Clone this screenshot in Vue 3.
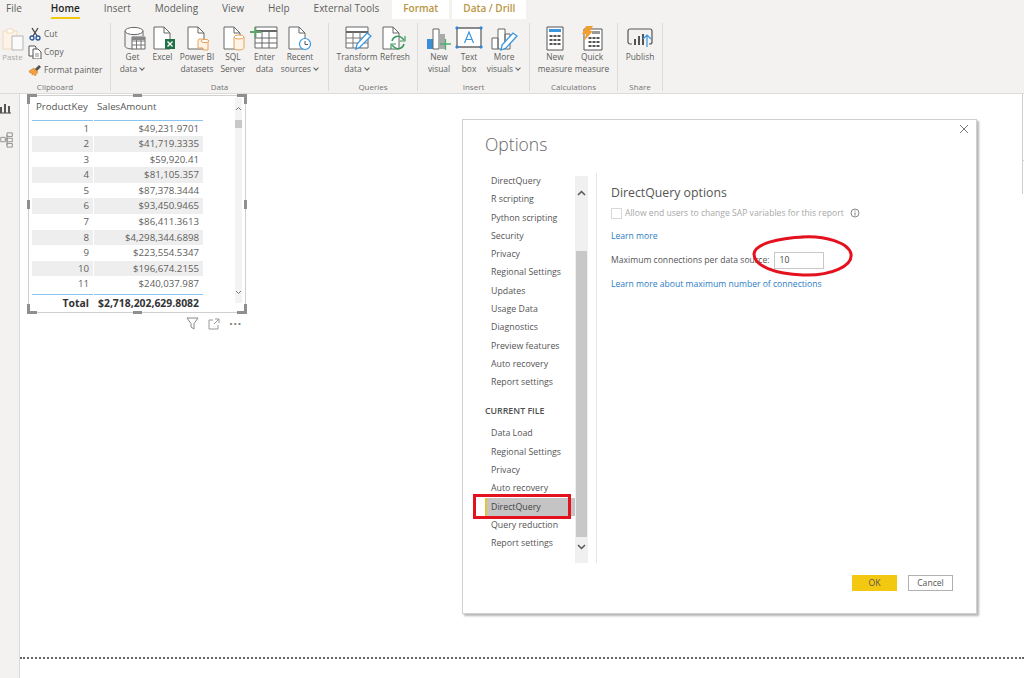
<template>
  <div class="app">
    <nav class="tabs">
      <span v-for="t in tabs" :key="t" class="tab" :class="{ first: t === 'File', active: t === 'Home' }">{{ t }}</span>
      <span class="tab ctx">Format</span>
      <span class="tab ctx second">Data / Drill</span>
    </nav>

    <div class="ribbon">
      <section class="group clipboard">
        <div class="items">
          <div class="btn paste">
            <svg width="24" height="26" viewBox="0 0 24 26"><path d="M2 5h14v18H2z" fill="#fdf3e6" stroke="#f3d9b8"/><path d="M6 3h6v4H6z" fill="#fff" stroke="#f3d9b8"/><path d="M11 10h11v14H11z" fill="#fafafa" stroke="#b5b5b5"/></svg>
            <span>Paste</span>
          </div>
          <div class="small">
            <div class="row">
              <svg width="14" height="14" viewBox="0 0 14 14"><path d="M4 1l5 8M10 1L5 9" stroke="#444" stroke-width="1.3" fill="none"/><circle cx="4" cy="11" r="2" fill="none" stroke="#2b579a" stroke-width="1.3"/><circle cx="10" cy="11" r="2" fill="none" stroke="#2b579a" stroke-width="1.3"/></svg>
              <span>Cut</span>
            </div>
            <div class="row">
              <svg width="14" height="14" viewBox="0 0 14 14"><path d="M1 1h6l1 1v9H1z" fill="#fff" stroke="#555"/><path d="M5 4h5l3 3v7H5z" fill="#fff" stroke="#555"/><path d="M7 9h4M7 11h4" stroke="#888"/></svg>
              <span>Copy</span>
            </div>
            <div class="row">
              <svg width="14" height="14" viewBox="0 0 14 14"><path d="M1 8l5-3 4 4-3 4-1-2-2 1 0-2-2 0z" fill="#f0a040" stroke="#d9822b" stroke-width=".6"/><path d="M7 6l4-4 2 2-4 4z" fill="#555"/></svg>
              <span>Format painter</span>
            </div>
          </div>
        </div>
        <div class="glabel">Clipboard</div>
      </section>

      <section class="group data">
        <div class="items">
          <div class="btn w29">
            <svg width="32" height="26" viewBox="0 0 32 26"><path d="M8 5v15c0 2 4 3 8 3M26 5v5" fill="none" stroke="#666"/><ellipse cx="17" cy="5" rx="9" ry="3.6" fill="#fff" stroke="#666"/><path d="M15 11h13v12H15z" fill="#fff" stroke="#666"/><path d="M15 15h13M15 19h13M19.5 11v12M24 11v12" stroke="#777"/><path d="M15 11h13v3H15z" fill="#888"/></svg>
            <span>Get<br>data <i class="chev"></i></span>
          </div>
          <div class="btn w31">
            <svg width="32" height="26" viewBox="0 0 32 26"><path d="M7 1h10l6 6v16H7z" fill="#fff" stroke="#666"/><path d="M17 1v6h6" fill="none" stroke="#666"/><path d="M18 13h10v10H18z" fill="#1e7145"/><path d="M20.5 15.5l5 5M25.5 15.5l-5 5" stroke="#fff" stroke-width="1.3"/></svg>
            <span>Excel</span>
          </div>
          <div class="btn w38">
            <svg width="32" height="26" viewBox="0 0 32 26"><path d="M7 1h10l6 6v16H7z" fill="#fff" stroke="#666"/><path d="M17 1v6h6" fill="none" stroke="#666"/><path d="M17 15v7h5v2h5v-8h-4v-3h-5z" fill="#fdf3e6" stroke="#e8a35a"/><ellipse cx="24" cy="15" rx="4" ry="1.6" fill="#fff" stroke="#e8a35a"/></svg>
            <span>Power BI<br>datasets</span>
          </div>
          <div class="btn w34">
            <svg width="32" height="26" viewBox="0 0 32 26"><path d="M7 1h10l6 6v16H7z" fill="#fff" stroke="#666"/><path d="M17 1v6h6" fill="none" stroke="#666"/><path d="M17 11v11c0 1 2 2 5 2s5-1 5-2V11" fill="#fdf3e6" stroke="#e8a35a"/><ellipse cx="22" cy="11" rx="5" ry="2" fill="#fff" stroke="#e8a35a"/></svg>
            <span>SQL<br>Server</span>
          </div>
          <div class="btn w29">
            <svg width="32" height="26" viewBox="0 0 32 26"><path d="M6 1h22v21H6z" fill="#fff" stroke="#666"/><path d="M6 5h22" stroke="#666" stroke-width="2"/><path d="M6 12h22M6 17h22M13 5v17M20 5v17" stroke="#666"/><path d="M1 6h11M6.5 1v11" stroke="#5aa469" stroke-width="1.8"/></svg>
            <span>Enter<br>data</span>
          </div>
          <div class="btn w42">
            <svg width="32" height="26" viewBox="0 0 32 26"><path d="M5 1h10l6 6v16H5z" fill="#fff" stroke="#666"/><path d="M15 1v6h6" fill="none" stroke="#666"/><circle cx="21" cy="18" r="5.5" fill="#fff" stroke="#3a96dd" stroke-width="1.2"/><path d="M21 15v3.5h3" fill="none" stroke="#555"/></svg>
            <span>Recent<br>sources <i class="chev"></i></span>
          </div>
        </div>
        <div class="glabel">Data</div>
      </section>

      <section class="group queries">
        <div class="items">
          <div class="btn w46">
            <svg width="32" height="26" viewBox="0 0 32 26"><path d="M5 1h22v21H5z" fill="#fff" stroke="#666"/><path d="M5 6h22" stroke="#666" stroke-width="2"/><path d="M5 12h22M5 17h22M12 6v16M19 6v16" stroke="#777"/><path d="M15 23l1-5 10-11 4 3-11 11z" fill="#fff" stroke="#3a96dd" stroke-width="1.3"/></svg>
            <span>Transform<br>data <i class="chev"></i></span>
          </div>
          <div class="btn w30">
            <svg width="32" height="26" viewBox="0 0 32 26"><path d="M4 1h10l6 6v16H4z" fill="#fff" stroke="#666"/><path d="M14 1v6h6" fill="none" stroke="#666"/><path d="M13 15a6 6 0 0 1 10-3l2 2M25 18a6 6 0 0 1-10 3l-2-2" fill="none" stroke="#3c9a5f" stroke-width="1.5"/><path d="M26 10v5h-5M12 23v-5h5" fill="none" stroke="#3c9a5f" stroke-width="1.2"/></svg>
            <span>Refresh</span>
          </div>
        </div>
        <div class="glabel">Queries</div>
      </section>

      <section class="group insert">
        <div class="items">
          <div class="btn w30">
            <svg width="32" height="26" viewBox="0 0 32 26"><path d="M4 13h6v10H4z" fill="#3a8fd6"/><path d="M10 3h6v20h-6z" fill="#fff" stroke="#666"/><path d="M16 8h6v15h-6z" fill="#aaa"/><path d="M17 18h11M22.5 13v11" stroke="#4caf6e" stroke-width="1.3"/></svg>
            <span>New<br>visual</span>
          </div>
          <div class="btn w30">
            <svg width="32" height="26" viewBox="0 0 32 26"><path d="M4 2h24v19H4z" fill="#fff" stroke="#666" stroke-width="1.3"/><path d="M3 1h2v2H3zM27 1h2v2h-2zM3 20h2v2H3zM27 20h2v2h-2z" fill="#2f86d6" stroke="#2f86d6"/><path d="M11.5 17l4.5-11 4.5 11M13 13.5h6" fill="none" stroke="#3a96dd" stroke-width="1.2"/></svg>
            <span>Text<br>box</span>
          </div>
          <div class="btn w40">
            <svg width="32" height="26" viewBox="0 0 32 26"><path d="M4 12h6v11H4zM10 3h7v20h-7zM17 8h5v15h-5z" fill="#fff" stroke="#666"/><path d="M13 24l1-5 11-12 4 3-11 12z" fill="#fff" stroke="#3a96dd" stroke-width="1.3"/></svg>
            <span>More<br>visuals <i class="chev"></i></span>
          </div>
        </div>
        <div class="glabel">Insert</div>
      </section>

      <section class="group calc">
        <div class="items">
          <div class="btn w38">
            <svg width="32" height="26" viewBox="0 0 32 26"><path d="M8 1h16v23H8z" fill="#fff" stroke="#555"/><path d="M10 3h12v3H10z" fill="#3a96dd"/><path d="M10.5 9h3v2h-3zM14.5 9h3v2h-3zM18.5 9h3v2h-3zM10.5 13h3v2h-3zM14.5 13h3v2h-3zM18.5 13h3v2h-3zM10.5 17h3v2h-3zM14.5 17h3v2h-3zM18.5 17h3v2h-3z" fill="#555"/></svg>
            <span>New<br>measure</span>
          </div>
          <div class="btn w36">
            <svg width="32" height="26" viewBox="0 0 32 26"><path d="M8 3h18v21H8z" fill="#fff" stroke="#555"/><path d="M16 5h8v3h-8z" fill="#999"/><path d="M12.5 11h3v2h-3zM16.5 11h3v2h-3zM20.5 11h3v2h-3zM12.5 15h3v2h-3zM16.5 15h3v2h-3zM20.5 15h3v2h-3zM12.5 19h3v2h-3zM16.5 19h3v2h-3zM20.5 19h3v2h-3z" fill="#555"/><path d="M10 0h7l-3 5h3L8 15l2-7H6z" fill="#f0a030"/></svg>
            <span>Quick<br>measure</span>
          </div>
        </div>
        <div class="glabel">Calculations</div>
      </section>

      <section class="group share">
        <div class="items">
          <div class="btn w44">
            <svg width="32" height="26" viewBox="0 0 32 26"><path d="M8 18H6a2 2 0 0 1-2-2V5a2 2 0 0 1 2-2h20a2 2 0 0 1 2 2v11a2 2 0 0 1-2 2h-1" fill="none" stroke="#555" stroke-width="1.2"/><path d="M10 13h2v6h-2zM14 10h2v9h-2zM18 8h2v11h-2z" fill="#555"/><path d="M23 21V9M19 13l4-4 4 4" fill="none" stroke="#3a96dd" stroke-width="1.2"/></svg>
            <span>Publish</span>
          </div>
        </div>
        <div class="glabel">Share</div>
      </section>
    </div>

    <div class="body">
      <aside class="rail">
        <svg width="14" height="14" viewBox="0 0 14 14"><path d="M0 12h11" stroke="#444"/><path d="M0 6h2v6H0zM4 3h2v9H4zM8 5h2v7H8z" fill="#555"/></svg>
        <svg width="14" height="16" viewBox="0 0 14 18"><path d="M0 6h5v5H0zM7 1h6v4H7zM7 7h6v4H7zM7 13h6v4H7z" fill="none" stroke="#888"/><path d="M5 8h2M7 3v12" stroke="#888"/></svg>
      </aside>

      <main class="canvas">
        <div class="visual">
          <div class="table">
            <div class="thead">
              <span>ProductKey</span>
              <span>SalesAmount</span>
            </div>
            <div v-for="(r, i) in rows" :key="r[0]" class="trow" :class="{ band: i % 2 === 1 }">
              <span>{{ r[0] }}</span>
              <span>{{ r[1] }}</span>
            </div>
            <div class="ttotal">
              <span>Total</span>
              <span>$2,718,202,629.8082</span>
            </div>
          </div>
          <div class="vscroll">
            <svg width="7" height="5" viewBox="0 0 7 5"><path d="M1 4l2.5-2.500L6 4" fill="none" stroke="#777"/></svg>
            <div class="vthumb"></div>
            <svg class="vdown" width="7" height="5" viewBox="0 0 7 5"><path d="M1 1l2.5 2.500L6 1" fill="none" stroke="#777"/></svg>
          </div>
          <i v-for="h in handles" :key="h" class="handle" :class="h"></i>
          <div class="vtools">
            <svg width="13" height="13" viewBox="0 0 13 13"><path d="M1 1h11L8 6.5V12L5 10V6.5z" fill="none" stroke="#888"/></svg>
            <svg width="12" height="12" viewBox="0 0 12 12"><path d="M5 2H1v9h9V7M7 1h4v4M11 1L6 6" fill="none" stroke="#999"/></svg>
            <span class="dots">&middot;&middot;&middot;</span>
          </div>
        </div>

        <div class="divider"></div>
        <div class="edge"></div>

        <div class="dialog">
          <svg class="close" width="10" height="10" viewBox="0 0 10 10"><path d="M1 1l8 8M9 1L1 9" stroke="#777" stroke-width="1"/></svg>
          <h1>Options</h1>
          <div class="panes">
            <div class="nav">
              <a v-for="n in globalNav" :key="n">{{ n }}</a>
              <h2>CURRENT FILE</h2>
              <a v-for="n in fileNav" :key="n" :class="{ sel: n === 'DirectQuery' }">{{ n }}</a>
              <div class="redbox"></div>
            </div>
            <div class="scroll">
              <svg width="9" height="6" viewBox="0 0 9 6"><path d="M1 5l3.5-3.500L8 5" fill="none" stroke="#555" stroke-width="1.5"/></svg>
              <div class="thumb"></div>
              <svg width="9" height="6" viewBox="0 0 9 6"><path d="M1 1l3.5 3.500L8 1" fill="none" stroke="#555" stroke-width="1.5"/></svg>
            </div>
            <div class="content">
              <h3>DirectQuery options</h3>
              <label class="check"><i class="box"></i>Allow end users to change SAP variables for this report
                <svg width="10" height="10" viewBox="0 0 10 10"><circle cx="5" cy="5" r="4" fill="none" stroke="#888"/><path d="M5 4.5v3M5 2.5v1" stroke="#777"/></svg>
              </label>
              <a class="link lm">Learn more</a>
              <div class="field">
                <span>Maximum connections per data source:</span>
                <div class="input">10</div>
              </div>
              <a class="link lmax">Learn more about maximum number of connections</a>
            </div>
          </div>
          <div class="actions">
            <button class="ok">OK</button>
            <button class="cancel">Cancel</button>
          </div>
          <svg class="ellipse" width="104" height="46" viewBox="0 0 104 46"><path d="M50 4c24-2 48 6 50 17 2 12-20 22-48 21C24 41 3 33 3 21 4 11 26 5 54 4" fill="none" stroke="#e3121e" stroke-width="3"/></svg>
        </div>
      </main>
    </div>
  </div>
</template>

<script setup>
const tabs = ['File', 'Home', 'Insert', 'Modeling', 'View', 'Help', 'External Tools']

const rows = [
  [1, '$49,231.9701'],
  [2, '$41,719.3335'],
  [3, '$59,920.41'],
  [4, '$81,105.357'],
  [5, '$87,378.3444'],
  [6, '$93,450.9465'],
  [7, '$86,411.3613'],
  [8, '$4,298,344.6898'],
  [9, '$223,554.5347'],
  [10, '$196,674.2155'],
  [11, '$240,037.987']
]

const handles = ['tl', 'tr', 'bl', 'br', 'mt', 'mb', 'ml', 'mr']

const globalNav = [
  'DirectQuery', 'R scripting', 'Python scripting', 'Security', 'Privacy', 'Regional Settings',
  'Updates', 'Usage Data', 'Diagnostics', 'Preview features', 'Auto recovery', 'Report settings'
]
const fileNav = ['Data Load', 'Regional Settings', 'Privacy', 'Auto recovery', 'DirectQuery', 'Query reduction', 'Report settings']
</script>

<style scoped>
.app {
  width: 1024px;
  height: 678px;
  overflow: hidden;
  display: flex;
  flex-direction: column;
  font-family: "Open Sans", "Noto Sans", sans-serif;
  color: #605e5c;
  background: #fff;
}

/* tabs */
.tabs {
  height: 19px;
  display: flex;
  background: #f3f2f1;
  font-size: 10px;
  line-height: 17px;
}
.tab {
  margin-right: 24px;
  height: 19px;
  box-sizing: border-box;
  white-space: nowrap;
}
.tab.first {
  margin-left: 6px;
  margin-right: 29px;
}
.tab.active {
  color: #252423;
  font-weight: 600;
  border-bottom: 2px solid #f2c811;
}
.tab.ctx {
  margin: 0 0 0 -11px;
  padding: 0 11px;
  background: #fff;
  color: #b8953f;
  font-weight: 600;
}
.tab.second {
  margin-left: 3px;
  padding: 0 11px;
}

/* ribbon */
.ribbon {
  height: 74px;
  display: flex;
  background: #f3f2f1;
  border-bottom: 1px solid #dcdbd9;
  font-size: 8.4px;
  line-height: 12px;
}
.group {
  box-sizing: border-box;
  display: flex;
  flex-direction: column;
  height: 68px;
  margin-top: 4px;
  border-right: 1px solid #dcdbd9;
}
.clipboard { width: 111px; }
.data { width: 218px; }
.queries { width: 89px; }
.insert { width: 112px; }
.calc { width: 88px; }
.share { width: 45px; }
.data .items { padding-left: 7px; }
.queries .items { padding-left: 5px; }
.insert .items { padding-left: 6px; }
.calc .items { padding-left: 6px; }
.items {
  flex: 1;
  display: flex;
}
.glabel {
  height: 13px;
  line-height: 17px;
  font-size: 8px;
  text-align: center;
  color: #737373;
}
.btn {
  display: flex;
  flex-direction: column;
  align-items: center;
  text-align: center;
  white-space: nowrap;
  padding-top: 3px;
}
.btn svg {
  margin-bottom: -1px;
  flex: none;
}
.w29 { width: 29px; }
.w30 { width: 30px; }
.w31 { width: 31px; }
.w34 { width: 34px; }
.w36 { width: 36px; }
.w38 { width: 38px; }
.w40 { width: 40px; }
.w42 { width: 42px; }
.w44 { width: 44px; }
.w46 { width: 46px; }
.chev {
  display: inline-block;
  width: 3px;
  height: 3px;
  margin: 0 1px 2px 1px;
  border-right: 1px solid #605e5c;
  border-bottom: 1px solid #605e5c;
  transform: rotate(45deg);
}
.paste {
  width: 25px;
  color: #a8a8a8;
  font-size: 8px;
}
.small {
  padding: 4px 0 0 3px;
  display: flex;
  flex-direction: column;
  gap: 3.5px;
}
.row {
  display: flex;
  align-items: center;
  gap: 2px;
  height: 14.5px;
  white-space: nowrap;
}

/* body */
.body {
  flex: 1;
  display: flex;
  min-height: 0;
}
.rail {
  position: relative;
  z-index: 1;
  width: 20px;
  box-sizing: border-box;
  background: #f3f2f1;
  border-right: 1px solid #dcdbd9;
  display: flex;
  flex-direction: column;
  gap: 17px;
  padding-top: 7px;
}
.canvas {
  flex: 1;
  position: relative;
}

/* table visual */
.visual {
  position: absolute;
  left: 8px;
  top: 1px;
  width: 218px;
  height: 218px;
  box-sizing: border-box;
  border: 1px solid #d0d0d0;
  padding: 4px 3px 0 3px;
  display: flex;
  font-size: 9.7px;
}
.table {
  width: 171px;
  flex: none;
}
.thead,
.trow,
.ttotal {
  display: grid;
  grid-template-columns: 61px 109px;
  column-gap: 1px;
}
.thead {
  height: 20.5px;
  line-height: 14px;
  color: #555;
}
.thead span {
  border-bottom: 1px solid #8cc4f0;
}
.thead span:first-child { padding-left: 4px; }
.thead span:last-child { padding-left: 3px; }
.trow {
  height: 15.6px;
  line-height: 15.6px;
  text-align: right;
}
.trow span {
  padding-right: 4px;
}
.trow.band span {
  background: #eeeeee;
}
.ttotal {
  height: 18px;
  line-height: 17px;
  text-align: right;
  font-weight: 700;
  font-size: 10.4px;
  color: #333;
  margin-top: 1.5px;
}
.ttotal span {
  border-top: 1px solid #8cc4f0;
  padding-right: 4px;
  white-space: nowrap;
}
.vscroll {
  margin-left: 32px;
  margin-top: -2px;
  width: 8px;
  height: 205px;
  background: #f3f3f3;
  display: flex;
  flex-direction: column;
  align-items: center;
  padding-top: 8px;
  box-sizing: border-box;
}
.vthumb {
  width: 7px;
  height: 8px;
  margin-top: 9px;
  background: #c8c8c8;
}
.vdown {
  margin-top: auto;
  margin-bottom: 8px;
}
.handle {
  position: absolute;
  background: #8f8f8f;
}
.tl, .tr, .bl, .br {
  width: 7px;
  height: 7px;
  background: none;
  border: 0 solid #8f8f8f;
}
.tl { left: -2px; top: -2px; border-width: 3px 0 0 3px; }
.tr { right: -2px; top: -2px; border-width: 3px 3px 0 0; }
.bl { left: -2px; bottom: -2px; border-width: 0 0 3px 3px; }
.br { right: -2px; bottom: -2px; border-width: 0 3px 3px 0; }
.mt, .mb {
  left: 104px;
  width: 9px;
  height: 3px;
}
.mt { top: -2px; }
.mb { bottom: -2px; }
.ml, .mr {
  top: 104px;
  width: 3px;
  height: 9px;
}
.ml { left: -2px; }
.mr { right: -2px; }
.vtools {
  position: absolute;
  right: 3px;
  top: 221px;
  display: flex;
  align-items: center;
  gap: 9px;
}
.dots {
  font-size: 12px;
  line-height: 12px;
  font-weight: 700;
  color: #777;
  letter-spacing: 0.8px;
}

.divider {
  position: absolute;
  left: 0;
  right: 0;
  top: 563px;
  border-top: 2px dotted #666;
}
.edge {
  position: absolute;
  right: 1px;
  top: 0;
  height: 100px;
  border-right: 1px solid #cfcfcf;
}
.edge::after {
  content: '';
  position: absolute;
  right: -2px;
  top: 66px;
  width: 2px;
  border-top: 1px solid #cfcfcf;
}

/* dialog */
.dialog {
  position: absolute;
  left: 442px;
  top: 25px;
  width: 515px;
  height: 495px;
  box-sizing: border-box;
  background: #fff;
  border: 1px solid #d0d0d0;
  box-shadow: 2px 2px 2px #b5b5b5;
  padding: 11px 0 0 22px;
  display: flex;
  flex-direction: column;
}
.close {
  position: absolute;
  right: 7px;
  top: 4px;
}
h1 {
  margin: 0;
  height: 29px;
  font-size: 17.5px;
  line-height: 27px;
  font-weight: 300;
  color: #666;
}
.panes {
  display: flex;
  height: 390px;
  margin-top: 13px;
}
.nav {
  position: relative;
  width: 90px;
  margin-top: -1px;
  font-size: 8.8px;
}
.nav a {
  display: block;
  height: 18.3px;
  line-height: 18.3px;
  padding-left: 6px;
  color: #555;
  white-space: nowrap;
}
.nav a.sel {
  background: #c4c4c4;
  border-left: 2px solid #e6c33c;
  padding-left: 4px;
  color: #444;
}
h2 {
  margin: 12.4px 0 6.4px;
  font-size: 8.8px;
  line-height: 14px;
  font-weight: 600;
  color: #505050;
}
.redbox {
  position: absolute;
  left: -12px;
  top: 322px;
  width: 98px;
  height: 25px;
  box-sizing: border-box;
  border: 3px solid #e3121e;
}
.scroll {
  width: 13px;
  height: 387px;
  margin-top: 3px;
  background: #f0f0f0;
  display: flex;
  flex-direction: column;
  align-items: center;
  padding: 14px 0 13px;
  box-sizing: border-box;
}
.thumb {
  flex: 1;
  width: 11px;
  margin: 55px 0 7px;
  background: #c8c8c8;
}
.content {
  margin-left: 8px;
  padding-left: 14px;
  border-left: 1px solid #e6e6e6;
  font-size: 8.6px;
  color: #555;
  flex: 1;
}
h3 {
  margin: 11px 0 0;
  font-size: 12.3px;
  line-height: 18px;
  font-weight: 400;
  color: #555;
}
.check {
  display: flex;
  align-items: center;
  gap: 3px;
  margin-top: 4px;
  height: 14px;
  color: #a8a8a8;
}
.check svg { margin-left: 3px; }
.box {
  width: 9px;
  height: 9px;
  border: 1px solid #d8d8d8;
}
.link {
  display: block;
  color: #2b7cc4;
}
.lm {
  margin-top: 9px;
  line-height: 14px;
}
.field {
  display: flex;
  align-items: center;
  gap: 4px;
  margin-top: 8px;
  height: 18px;
}
.input {
  width: 50px;
  height: 17px;
  box-sizing: border-box;
  border: 1px solid #c8c8c8;
  padding-left: 5px;
  line-height: 15px;
  background: #fff;
  color: #444;
}
.lmax {
  margin-top: 8px;
  line-height: 14px;
}
.actions {
  display: flex;
  justify-content: flex-end;
  gap: 11px;
  margin: 12px 23px 0 0;
}
button {
  width: 45px;
  height: 16px;
  box-sizing: border-box;
  padding: 0;
  font: 8.6px "Open Sans", "Noto Sans", sans-serif;
  color: #555;
}
.ok {
  background: #f2c811;
  border: 0;
}
.cancel {
  background: #fff;
  border: 1px solid #b0b0b0;
}
.ellipse {
  position: absolute;
  left: 288px;
  top: 113px;
}
</style>
